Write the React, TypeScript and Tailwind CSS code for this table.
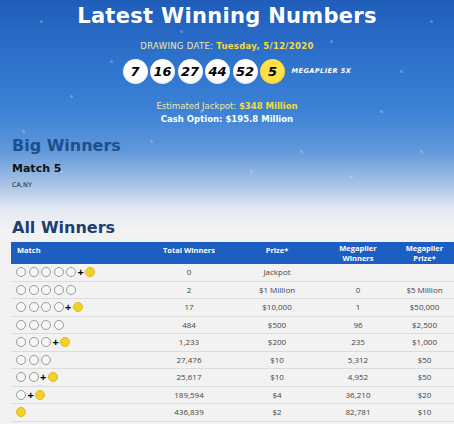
import React from 'react'

interface Row {
  white: number
  mega: boolean
  total: string
  prize: string
  mWinners: string
  mPrize: string
}

const rows: Row[] = [
  { white: 5, mega: true, total: '0', prize: 'Jackpot', mWinners: '', mPrize: '' },
  { white: 5, mega: false, total: '2', prize: '$1 Million', mWinners: '0', mPrize: '$5 Million' },
  { white: 4, mega: true, total: '17', prize: '$10,000', mWinners: '1', mPrize: '$50,000' },
  { white: 4, mega: false, total: '484', prize: '$500', mWinners: '96', mPrize: '$2,500' },
  { white: 3, mega: true, total: '1,233', prize: '$200', mWinners: '235', mPrize: '$1,000' },
  { white: 3, mega: false, total: '27,476', prize: '$10', mWinners: '5,312', mPrize: '$50' },
  { white: 2, mega: true, total: '25,617', prize: '$10', mWinners: '4,952', mPrize: '$50' },
  { white: 1, mega: true, total: '189,594', prize: '$4', mWinners: '36,210', mPrize: '$20' },
  { white: 0, mega: true, total: '436,839', prize: '$2', mWinners: '82,781', mPrize: '$10' },
]

const numbers = ['7', '16', '27', '44', '52']

// faint snow dots on the blue backdrop
const snow = [
  [40, 20], [70, 95], [22, 130], [150, 140], [200, 110], [330, 40], [400, 70], [430, 20],
  [380, 110], [300, 150], [250, 170], [110, 60], [60, 170], [420, 150], [350, 175], [180, 30],
]

function Ball({ n, mega }: { n: string; mega?: boolean }) {
  return (
    <div
      className={
        'w-[25px] h-[25px] rounded-full flex items-center justify-center text-[13px] font-bold italic text-black ' +
        (mega
          ? 'bg-[radial-gradient(circle_at_50%_45%,#ffe14a_55%,#e8b90c_100%)]'
          : 'bg-[radial-gradient(circle_at_50%_45%,#ffffff_55%,#c9d3df_100%)]')
      }
    >
      {n}
    </div>
  )
}

function Dot({ mega }: { mega?: boolean }) {
  return (
    <span
      className={
        'inline-block w-[10px] h-[10px] rounded-full border ' +
        (mega ? 'bg-[#f4d02a] border-[#e2b90f]' : 'bg-[#f7f7f7] border-[#9a9a9a]')
      }
    />
  )
}

export default function App() {
  return (
    <div className="w-[454px] h-[424px] overflow-hidden relative bg-[#f2f2f2] font-['DejaVu_Sans',sans-serif]">
      <div className="absolute inset-x-0 top-0 h-[230px] bg-[linear-gradient(180deg,#1f5db9_0px,#2b6fca_50px,#3b82d6_110px,#5f97da_150px,#a9c3e6_185px,#e4eaf2_210px,#f2f2f2_230px)]" />
      {snow.map(([x, y], i) => (
        <span
          key={i}
          className="absolute w-[3px] h-[3px] rounded-full bg-white/25"
          style={{ left: x, top: y }}
        />
      ))}

      <div className="relative">
        <h1 className="text-center text-white font-bold text-[21px] leading-[28px] pt-[2px] tracking-[0.3px]">
          Latest Winning Numbers
        </h1>
        <p className="text-center text-[8.5px] leading-[12px] mt-[10px] text-[#f1e6a6] tracking-[0.3px]">
          DRAWING DATE: <span className="font-bold text-[#f5dc3c]">Tuesday, 5/12/2020</span>
        </p>
        <div className="flex items-center justify-center gap-[2.5px] mt-[7px] pl-[28px]">
          {numbers.map((n) => (
            <Ball key={n} n={n} />
          ))}
          <Ball n="5" mega />
          <span className="ml-[4px] text-white text-[6.5px] font-bold italic tracking-[0.5px] w-[68px]">
            MEGAPLIER 5X
          </span>
        </div>
        <p className="text-center text-[8.5px] leading-[12px] mt-[16px] text-[#f1e6a6]">
          Estimated Jackpot: <span className="font-bold text-[#f5dc3c]">$348 Million</span>
        </p>
        <p className="text-center text-[8.5px] leading-[12px] mt-[1px] text-white font-semibold">
          Cash Option: $195.8 Million
        </p>

        <div className="px-[12px]">
          <h2 className="text-[#1e4f8c] font-bold text-[16px] leading-[20px] mt-[11px]">Big Winners</h2>
          <p className="font-bold text-[11px] leading-[14px] mt-[6px] text-[#111]">Match 5</p>
          <p className="text-[6.5px] leading-[10px] mt-[4px] text-[#222]">CA,NY</p>
          <h2 className="text-[#1b3f6e] font-bold text-[16px] leading-[20px] mt-[28px]">All Winners</h2>
        </div>

        <div className="ml-[11px] w-[443px] mt-[4px] text-[8px] font-['Open_Sans',sans-serif]">
          <div className="grid grid-cols-[134px_88px_88px_74px_59px] h-[22px] bg-[#1c5ec2] text-white font-bold text-[7.5px] leading-[10px] items-center">
            <div className="pl-[6px] self-start pt-[3px]">Match</div>
            <div className="text-center self-start pt-[3px]">Total Winners</div>
            <div className="text-center self-start pt-[3px]">Prize*</div>
            <div className="text-center flex flex-col">
              <span>Megaplier</span>
              <span>Winners</span>
            </div>
            <div className="text-center flex flex-col">
              <span>Megaplier</span>
              <span>Prize*</span>
            </div>
          </div>
          {rows.map((r, i) => (
            <div
              key={i}
              className="grid grid-cols-[134px_88px_88px_74px_59px] h-[17.5px] items-center border-b border-[#dcdcdc] text-[#444]"
            >
              <div className="pl-[5px] flex items-center gap-[2.5px]">
                {Array.from({ length: r.white }).map((_, j) => (
                  <Dot key={j} />
                ))}
                {r.mega && r.white > 0 && <span className="text-black font-bold text-[11px] leading-[10px] -mx-[1px]">+</span>}
                {r.mega && <Dot mega />}
              </div>
              <div className="text-center">{r.total}</div>
              <div className="text-center">{r.prize}</div>
              <div className="text-center">{r.mWinners}</div>
              <div className="text-center">{r.mPrize}</div>
            </div>
          ))}
        </div>
      </div>
    </div>
  )
}
